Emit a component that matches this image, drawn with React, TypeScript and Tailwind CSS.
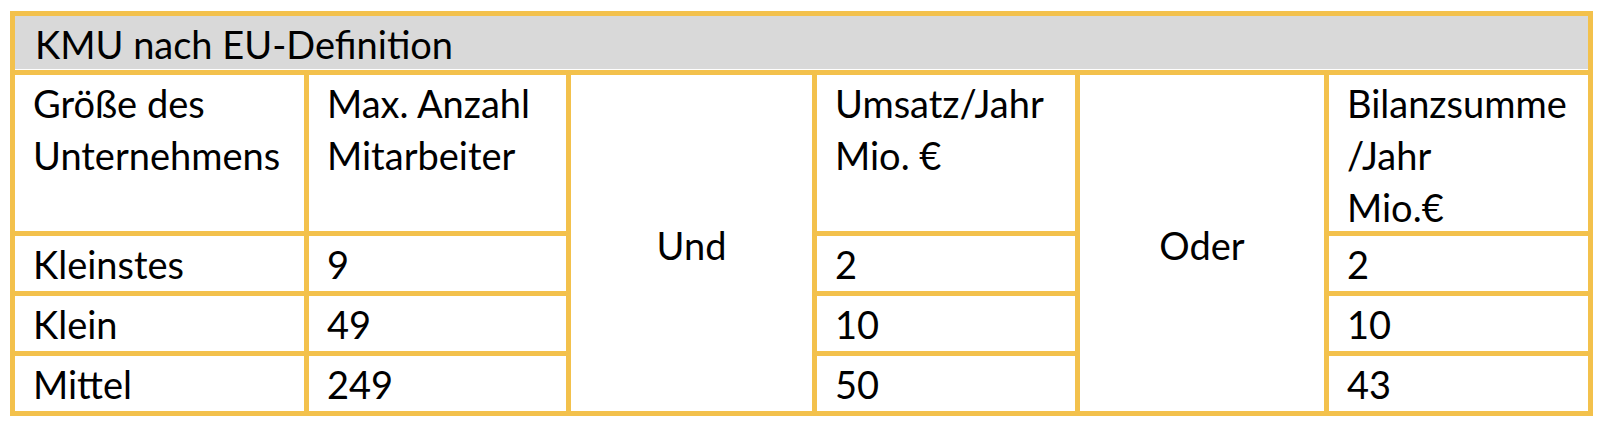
export default function App() {
  const cell = "bg-white pl-[18px] pt-[2px] whitespace-nowrap";
  return (
    <div className="min-h-screen bg-white pt-[11px] pl-[10px] [font-family:Lato,'Open_Sans',sans-serif] text-black">
      <div className="grid w-[1583px] grid-cols-[289px_257px_241px_258px_244px_259px] grid-rows-[54px_156px_55px_55px_55px] gap-[5px] bg-[#F3C14C] p-[5px] text-[38px] leading-[52px]">
        <div className="col-span-6 border-b border-white bg-[#D9D9D9] pl-[20px] pt-[2px] whitespace-nowrap">KMU nach EU-Definition</div>

        <div className={cell}>Größe des<br />Unternehmens</div>
        <div className={cell}>Max. Anzahl<br />Mitarbeiter</div>
        <div className="row-span-4 flex items-center justify-center bg-white pt-[3px]">Und</div>
        <div className={cell}>Umsatz/Jahr<br />Mio. €</div>
        <div className="row-span-4 flex items-center justify-center bg-white pt-[3px]">Oder</div>
        <div className={cell}>Bilanzsumme<br />/Jahr<br />Mio.€</div>

        <div className={cell}>Kleinstes</div>
        <div className={cell}>9</div>
        <div className={cell}>2</div>
        <div className={cell}>2</div>

        <div className={cell}>Klein</div>
        <div className={cell}>49</div>
        <div className={cell}>10</div>
        <div className={cell}>10</div>

        <div className={cell}>Mittel</div>
        <div className={cell}>249</div>
        <div className={cell}>50</div>
        <div className={cell}>43</div>
      </div>
    </div>
  );
}
